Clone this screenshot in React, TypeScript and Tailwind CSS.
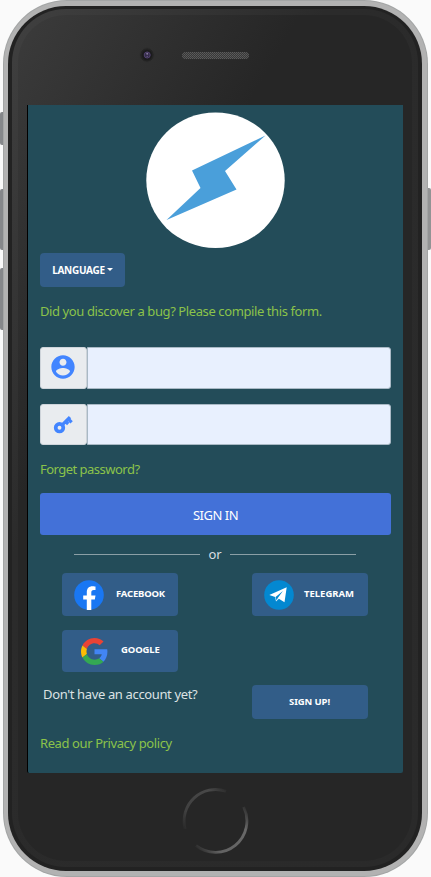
import React from "react";

const FONT = "font-['Noto_Sans','Open_Sans',sans-serif]";

function Bolt() {
  return (
    <svg className="mx-auto block h-[137px] w-[140px]" viewBox="0 0 140 137">
      <ellipse cx="69.500" cy="68.200" rx="69.200" ry="67.800" fill="#fff" />
      <path d="M119.500 23.500 46 58.500 54.500 76 20.500 108 90.500 77.500 79 59Z" fill="#4a9fda" />
    </svg>
  );
}

function UserIcon() {
  return (
    <svg className="block h-[28px] w-[28px]" viewBox="0 0 24 24" fill="#4285ff">
      <path d="M12 2C6.480 2 2 6.480 2 12s4.480 10 10 10 10-4.480 10-10S17.520 2 12 2zm0 3c1.660 0 3 1.340 3 3s-1.340 3-3 3-3-1.340-3-3 1.340-3 3-3zm0 14.200c-2.500 0-4.710-1.280-6-3.220.030-1.990 4-3.080 6-3.080 1.990 0 5.970 1.090 6 3.080-1.290 1.940-3.500 3.220-6 3.220z" />
    </svg>
  );
}

function KeyIcon() {
  return (
    <svg className="block h-[20px] w-[20px]" viewBox="0 0 20 20" fill="none" stroke="#4285ff">
      <circle cx="6.500" cy="12.700" r="3.800" strokeWidth="3.700" />
      <path d="M9 10.100 17 2.100M15.200 3.800l3.400 3.600M12.600 6.400l2.600 2.600" strokeWidth="3.300" />
    </svg>
  );
}

function FacebookLogo() {
  return (
    <svg className="block h-[30px] w-[30px]" viewBox="0 0 30 30">
      <circle cx="15" cy="15" r="14.800" fill="#1977f3" />
      <path d="M12.800 30V19.500H9.200v-4.100h3.600v-3.200c0-3.800 2.200-5.900 5.700-5.900 1.600 0 3 .3 3 .3v3.500h-1.700c-1.900 0-2.500 1.100-2.500 2.300v3h4.200l-.7 4.100h-3.500V30z" fill="#fff" />
    </svg>
  );
}

function TelegramLogo() {
  return (
    <svg className="block h-[30px] w-[30px]" viewBox="0 0 30 30">
      <circle cx="15" cy="15" r="14.800" fill="#0388d1" />
      <path d="M5.300 15 22.700 7.300 20.500 22.300 14.900 18.700 12 21.500 11.200 17Z" fill="#fff" />
      <path d="m11.600 17 7.300-6-5.100 7-1.200 2.600z" fill="#0388d1" />
    </svg>
  );
}

function GoogleLogo() {
  return (
    <svg className="block h-[27px] w-[27px]" viewBox="0 0 48 48">
      <path fill="#ea4335" d="M24 9.500c3.540 0 6.710 1.220 9.210 3.600l6.850-6.850C35.900 2.380 30.470 0 24 0 14.620 0 6.510 5.380 2.560 13.220l7.980 6.190C12.430 13.720 17.740 9.500 24 9.500z" />
      <path fill="#4285f4" d="M46.980 24.550c0-1.570-.15-3.090-.38-4.550H24v9.020h12.940c-.58 2.960-2.260 5.480-4.780 7.180l7.730 6c4.510-4.180 7.090-10.360 7.090-17.650z" />
      <path fill="#fbbc05" d="M10.530 28.590c-.48-1.450-.76-2.990-.76-4.590s.27-3.140.76-4.590l-7.980-6.190C.92 16.460 0 20.120 0 24c0 3.880.92 7.540 2.560 10.780l7.970-6.190z" />
      <path fill="#34a853" d="M24 48c6.480 0 11.930-2.130 15.890-5.810l-7.730-6c-2.150 1.450-4.920 2.300-8.160 2.300-6.260 0-11.570-4.220-13.470-9.910l-7.980 6.190C6.510 42.620 14.620 48 24 48z" />
    </svg>
  );
}

function Field({ icon, className }: { icon: React.ReactNode; className: string }) {
  return (
    <div className={`flex w-[351px] ${className}`}>
      <div className="flex w-[47px] items-center justify-center rounded-[3px] border border-[#ced4da] bg-[#e9ecef]">{icon}</div>
      <div className="flex-1 rounded-r-[3px] border border-[#a9b9c5] bg-[#e8f0fe]" />
    </div>
  );
}

function Speaker() {
  return (
    <svg className="absolute left-[182px] top-[52px] h-[7px] w-[67px]" viewBox="0 0 67 7">
      <defs>
        <pattern id="mesh" width="2" height="2" patternUnits="userSpaceOnUse">
          <rect width="2" height="2" fill="#383838" />
          <rect width="1" height="1" fill="#5c5c5c" />
          <rect x="1" y="1" width="1" height="1" fill="#555" />
        </pattern>
      </defs>
      <rect width="67" height="7" rx="3.500" fill="url(#mesh)" />
    </svg>
  );
}

function Camera() {
  return (
    <svg className="absolute left-[139px] top-[47px] h-[16px] w-[16px]" viewBox="0 0 16 16">
      <circle cx="8" cy="8" r="7.200" fill="#242424" stroke="#303030" />
      <circle cx="8" cy="8" r="5.200" fill="#1b1b1d" />
      <circle cx="8.200" cy="8" r="3" fill="#332c48" stroke="#51416f" />
      <circle cx="8.200" cy="6.700" r="1" fill="#85779c" />
      <circle cx="8.200" cy="9.500" r=".7" fill="#655482" />
    </svg>
  );
}

function HomeButton() {
  return (
    <svg className="absolute left-[181px] top-[787px] h-[68px] w-[68px]" viewBox="0 0 68 68" fill="none" strokeWidth="2.800">
      <defs>
        <linearGradient id="homeTop" gradientUnits="userSpaceOnUse" x1="2" y1="44" x2="48" y2="2">
          <stop offset="0" stopColor="#262626" />
          <stop offset=".25" stopColor="#404040" />
          <stop offset=".75" stopColor="#484848" />
          <stop offset="1" stopColor="#262626" />
        </linearGradient>
        <linearGradient id="homeLow" gradientUnits="userSpaceOnUse" x1="14" y1="62" x2="66" y2="18">
          <stop offset="0" stopColor="#262626" />
          <stop offset=".25" stopColor="#626262" />
          <stop offset=".75" stopColor="#686868" />
          <stop offset="1" stopColor="#262626" />
        </linearGradient>
      </defs>
      <path d="M4.100 42A31.500 31.500 0 0 1 45 4.300" stroke="url(#homeTop)" />
      <path d="M15 58.700A31.500 31.500 0 0 0 62.700 20" stroke="url(#homeLow)" />
    </svg>
  );
}

const social = "flex w-[116px] items-center rounded-[4px] bg-[#325d88] text-[9.500px] font-bold text-white";

export default function App() {
  return (
    <div className={`relative h-[877px] w-[431px] overflow-hidden bg-[#fafafa] ${FONT}`}>
      <div className="absolute left-0 top-[112px] h-[33px] w-[5px] rounded-l-[2px] bg-[#85878a]" />
      <div className="absolute left-0 top-[189px] h-[61px] w-[5px] rounded-l-[2px] bg-[#85878a]" />
      <div className="absolute left-0 top-[268px] h-[62px] w-[5px] rounded-l-[2px] bg-[#85878a]" />
      <div className="absolute left-[426px] top-[188px] h-[62px] w-[5px] rounded-r-[2px] bg-[#929394]" />

      <div className="relative ml-[3px] h-[877px] w-[425px] rounded-[64px] bg-[#a3a5a5] p-px">
        <div className="h-full rounded-[63px] bg-[#b2b2b2] pb-[5px] pl-[4px] pr-[5px] pt-[5px]">
          <div className="h-full rounded-[58px] bg-[#222] p-[4px] pt-[3px]">
            <div className="h-full rounded-[54px] bg-[linear-gradient(120deg,#404040,#2b2b2b_35%,#2a2a2a)] p-[6px]">
              <div className="h-full rounded-[48px] bg-[linear-gradient(120deg,#3b3b3b,#262626_32%,#262626)] pl-[9px] pt-[90px]">
                <main className="box-border flex h-[668px] w-[376px] flex-col rounded-b-[2px] border-l border-black bg-[#234c59] pl-[12px] text-[13px] leading-[20px]">
                  <div className="ml-[-12px] mt-[7px]"><Bolt /></div>
                  <button className="mt-[4px] flex h-[34px] w-[85px] items-center justify-center gap-[2px] rounded-[4px] bg-[#325d88] text-[10px] font-bold tracking-[-0.270px] text-white">
                    <span>LANGUAGE</span>
                    <span className="mb-[2px] border-x-[3.500px] border-t-[3.500px] border-x-transparent border-t-white" />
                  </button>
                  <a className="mt-[14px] whitespace-nowrap tracking-[-0.400px] text-[#8bc34a]"><span>Did you discover a bug? Please compile this form.</span></a>
                  <Field className="mt-[26px] h-[42px]" icon={<div className="mb-[3px] mr-px"><UserIcon /></div>} />
                  <Field className="mt-[15px] h-[41px]" icon={<div className="mr-[2px]"><KeyIcon /></div>} />
                  <a className="mt-[14px] tracking-[-0.520px] text-[#8bc34a]"><span>Forget password?</span></a>
                  <button className="mt-[14px] h-[42px] w-[351px] rounded-[3px] bg-[#4371d8] pt-px text-[13px] tracking-[-0.500px] text-white">SIGN IN</button>
                  <div className="ml-[34px] mt-[9px] flex h-[20px] w-[282px] items-center justify-between text-[#d8dfe2]">
                    <span className="h-px w-[126px] bg-[#8b9fa6]" />
                    <span>or</span>
                    <span className="h-px w-[126px] bg-[#8b9fa6]" />
                  </div>
                  <div className="ml-[22px] mt-[9px] grid w-[306px] grid-cols-2 gap-x-[74px] gap-y-[14px]">
                    <button className={`h-[43px] gap-[12px] pl-[12px] tracking-[-0.200px] ${social}`}><FacebookLogo /><span className="mb-[2px]">FACEBOOK</span></button>
                    <button className={`h-[43px] gap-[10px] pl-[12px] tracking-[0px] ${social}`}><TelegramLogo /><span className="mb-[2px]">TELEGRAM</span></button>
                    <button className={`h-[42px] gap-[13px] pl-[19px] tracking-[-0.120px] ${social}`}><GoogleLogo /><span className="mb-[2px]">GOOGLE</span></button>
                  </div>
                  <div className="mt-[13px] flex h-[34px] items-start">
                    <span className="-mt-px ml-[3px] w-[209px] whitespace-nowrap tracking-[-0.360px] text-[#dce2e4]">Don't have an account yet?</span>
                    <button className={`h-[34px] justify-center pb-px pr-px tracking-[-0.100px] ${social}`}>SIGN UP!</button>
                  </div>
                  <a className="mt-[14px] tracking-[-0.400px] text-[#8bc34a]"><span>Read our Privacy policy</span></a>
                </main>
              </div>
            </div>
          </div>
        </div>
      </div>
      <Speaker />
      <Camera />
      <HomeButton />
    </div>
  );
}
